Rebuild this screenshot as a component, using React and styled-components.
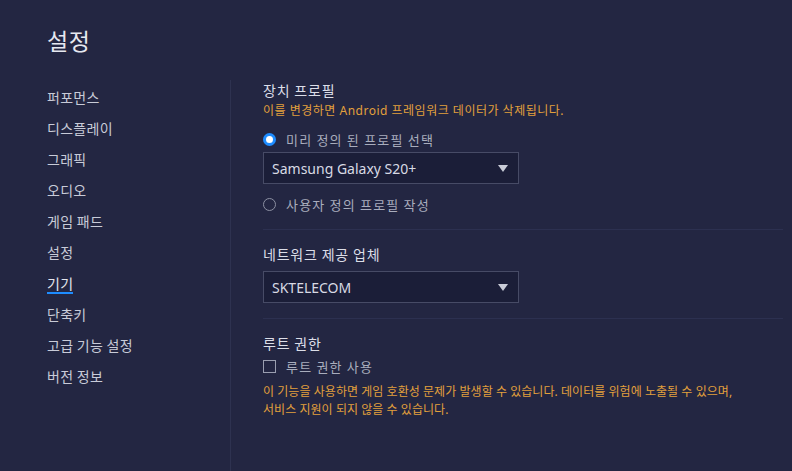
import React, { useState } from "react";
import styled, { createGlobalStyle } from "styled-components";

const GlobalStyle = createGlobalStyle`
  html, body {
    margin: 0;
    padding: 0;
    background: #232642;
  }
  body {
    font-family: "Noto Sans", "Noto Sans CJK KR", sans-serif;
    color: #d4d6e0;
  }
`;

const menu = [
  "퍼포먼스",
  "디스플레이",
  "그래픽",
  "오디오",
  "게임 패드",
  "설정",
  "기기",
  "단축키",
  "고급 기능 설정",
  "버전 정보",
];

export default function App() {
  const [active, setActive] = useState("기기");
  const [preset, setPreset] = useState(true);
  const [root, setRoot] = useState(false);

  return (
    <>
      <GlobalStyle />
      <Page>
        <Title>설정</Title>
        <Body>
          <Nav>
            {menu.map((m) => (
              <NavItem key={m} $active={m === active} onClick={() => setActive(m)}>
                {m}
              </NavItem>
            ))}
          </Nav>
          <Content>
            <Section>
              <Heading>장치 프로필</Heading>
              <Warn $top={2} $spacing={0.5}>
                이를 변경하면 Android 프레임워크 데이터가 삭제됩니다.
              </Warn>
              <Option $top={8} onClick={() => setPreset(true)}>
                <Radio $on={preset} />
                <OptLabel>미리 정의 된 프로필 선택</OptLabel>
              </Option>
              <Select $top={2}>
                <span>Samsung Galaxy S20+</span>
                <Caret />
              </Select>
              <Option $top={9} onClick={() => setPreset(false)}>
                <Radio $on={!preset} />
                <OptLabel>사용자 정의 프로필 작성</OptLabel>
              </Option>
            </Section>
            <Section>
              <Heading>네트워크 제공 업체</Heading>
              <Select $top={7}>
                <span>SKTELECOM</span>
                <Caret />
              </Select>
            </Section>
            <Section $last>
              <Heading>루트 권한</Heading>
              <Option $top={2} onClick={() => setRoot(!root)}>
                <Check $on={root} />
                <OptLabel>루트 권한 사용</OptLabel>
              </Option>
              <Warn $top={6}>
                이 기능을 사용하면 게임 호환성 문제가 발생할 수 있습니다. 데이터를 위험에 노출될 수 있으며,
                <br />
                서비스 지원이 되지 않을 수 있습니다.
              </Warn>
            </Section>
          </Content>
        </Body>
      </Page>
    </>
  );
}

const Page = styled.div`
  width: 792px;
  height: 471px;
  box-sizing: border-box;
  padding: 25px 0 0 47px;
  overflow: hidden;
`;

const Title = styled.h1`
  margin: 0;
  font-family: "Noto Sans CJK KR", sans-serif;
  font-weight: 400;
  font-size: 23px;
  line-height: 30px;
  letter-spacing: 0.5px;
  color: #e6e8f0;
`;

const Body = styled.div`
  display: flex;
  margin-top: 25px;
`;

const Nav = styled.nav`
  width: 183px;
  display: flex;
  flex-direction: column;
  gap: 11px;
  padding-top: 8px;
`;

const NavItem = styled.div`
  align-self: flex-start;
  font-family: "Noto Sans CJK KR", sans-serif;
  font-size: 14px;
  letter-spacing: 0.3px;
  line-height: 18px;
  height: 20px;
  color: ${(p) => (p.$active ? "#e4e6ee" : "#c8cbd8")};
  border-bottom: 2px solid ${(p) => (p.$active ? "#1e8cff" : "transparent")};
  box-sizing: border-box;
  cursor: pointer;
`;

const Content = styled.div`
  flex: 1;
  border-left: 1px solid #2e3250;
  padding: 0 9px 40px 32px;
  min-height: 360px;
`;

const Section = styled.div`
  display: flex;
  flex-direction: column;
  align-items: flex-start;
  padding: 14px 0 ${(p) => (p.$last ? "0" : "15px")};
  border-bottom: ${(p) => (p.$last ? "none" : "1px solid #2c3050")};
  &:first-child {
    padding-top: 0;
    padding-bottom: 14px;
  }
`;

const Heading = styled.div`
  font-family: "Noto Sans CJK KR", sans-serif;
  font-size: 14px;
  letter-spacing: 0.8px;
  line-height: 20px;
  color: #dcdee8;
`;

const Warn = styled.div`
  font-family: "Noto Sans", "Noto Sans CJK KR", sans-serif;
  font-size: 12px;
  letter-spacing: ${(p) => p.$spacing ?? 0.05}px;
  line-height: 18px;
  color: #e2a03c;
  margin-top: ${(p) => p.$top}px;
`;

const Option = styled.div`
  display: flex;
  align-items: center;
  gap: 10px;
  height: 22px;
  margin-top: ${(p) => p.$top}px;
  cursor: pointer;
`;

const OptLabel = styled.span`
  font-family: "Noto Sans CJK KR", sans-serif;
  font-size: 13px;
  letter-spacing: 1.2px;
  color: #a9adbd;
`;

const Radio = styled.span`
  width: 13px;
  height: 13px;
  border-radius: 50%;
  box-sizing: border-box;
  border: ${(p) => (p.$on ? "3px solid #1e8cff" : "1.5px solid #8c90a2")};
  background: ${(p) => (p.$on ? "#ffffff" : "transparent")};
`;

const Check = styled.span`
  width: 13px;
  height: 13px;
  box-sizing: border-box;
  border: 1.5px solid #9a9eb0;
  background: ${(p) => (p.$on ? "#1e8cff" : "transparent")};
`;

const Select = styled.div`
  width: 256px;
  height: 32px;
  box-sizing: border-box;
  display: flex;
  align-items: center;
  justify-content: space-between;
  padding: 0 10px 0 8px;
  background: #1b1e38;
  border: 1px solid #474b66;
  font-size: 14px;
  color: #d8dae4;
  margin-top: ${(p) => p.$top}px;
  cursor: pointer;
`;

const Caret = styled.span`
  width: 0;
  height: 0;
  border-left: 5px solid transparent;
  border-right: 5px solid transparent;
  border-top: 7px solid #c9ccd8;
`;
